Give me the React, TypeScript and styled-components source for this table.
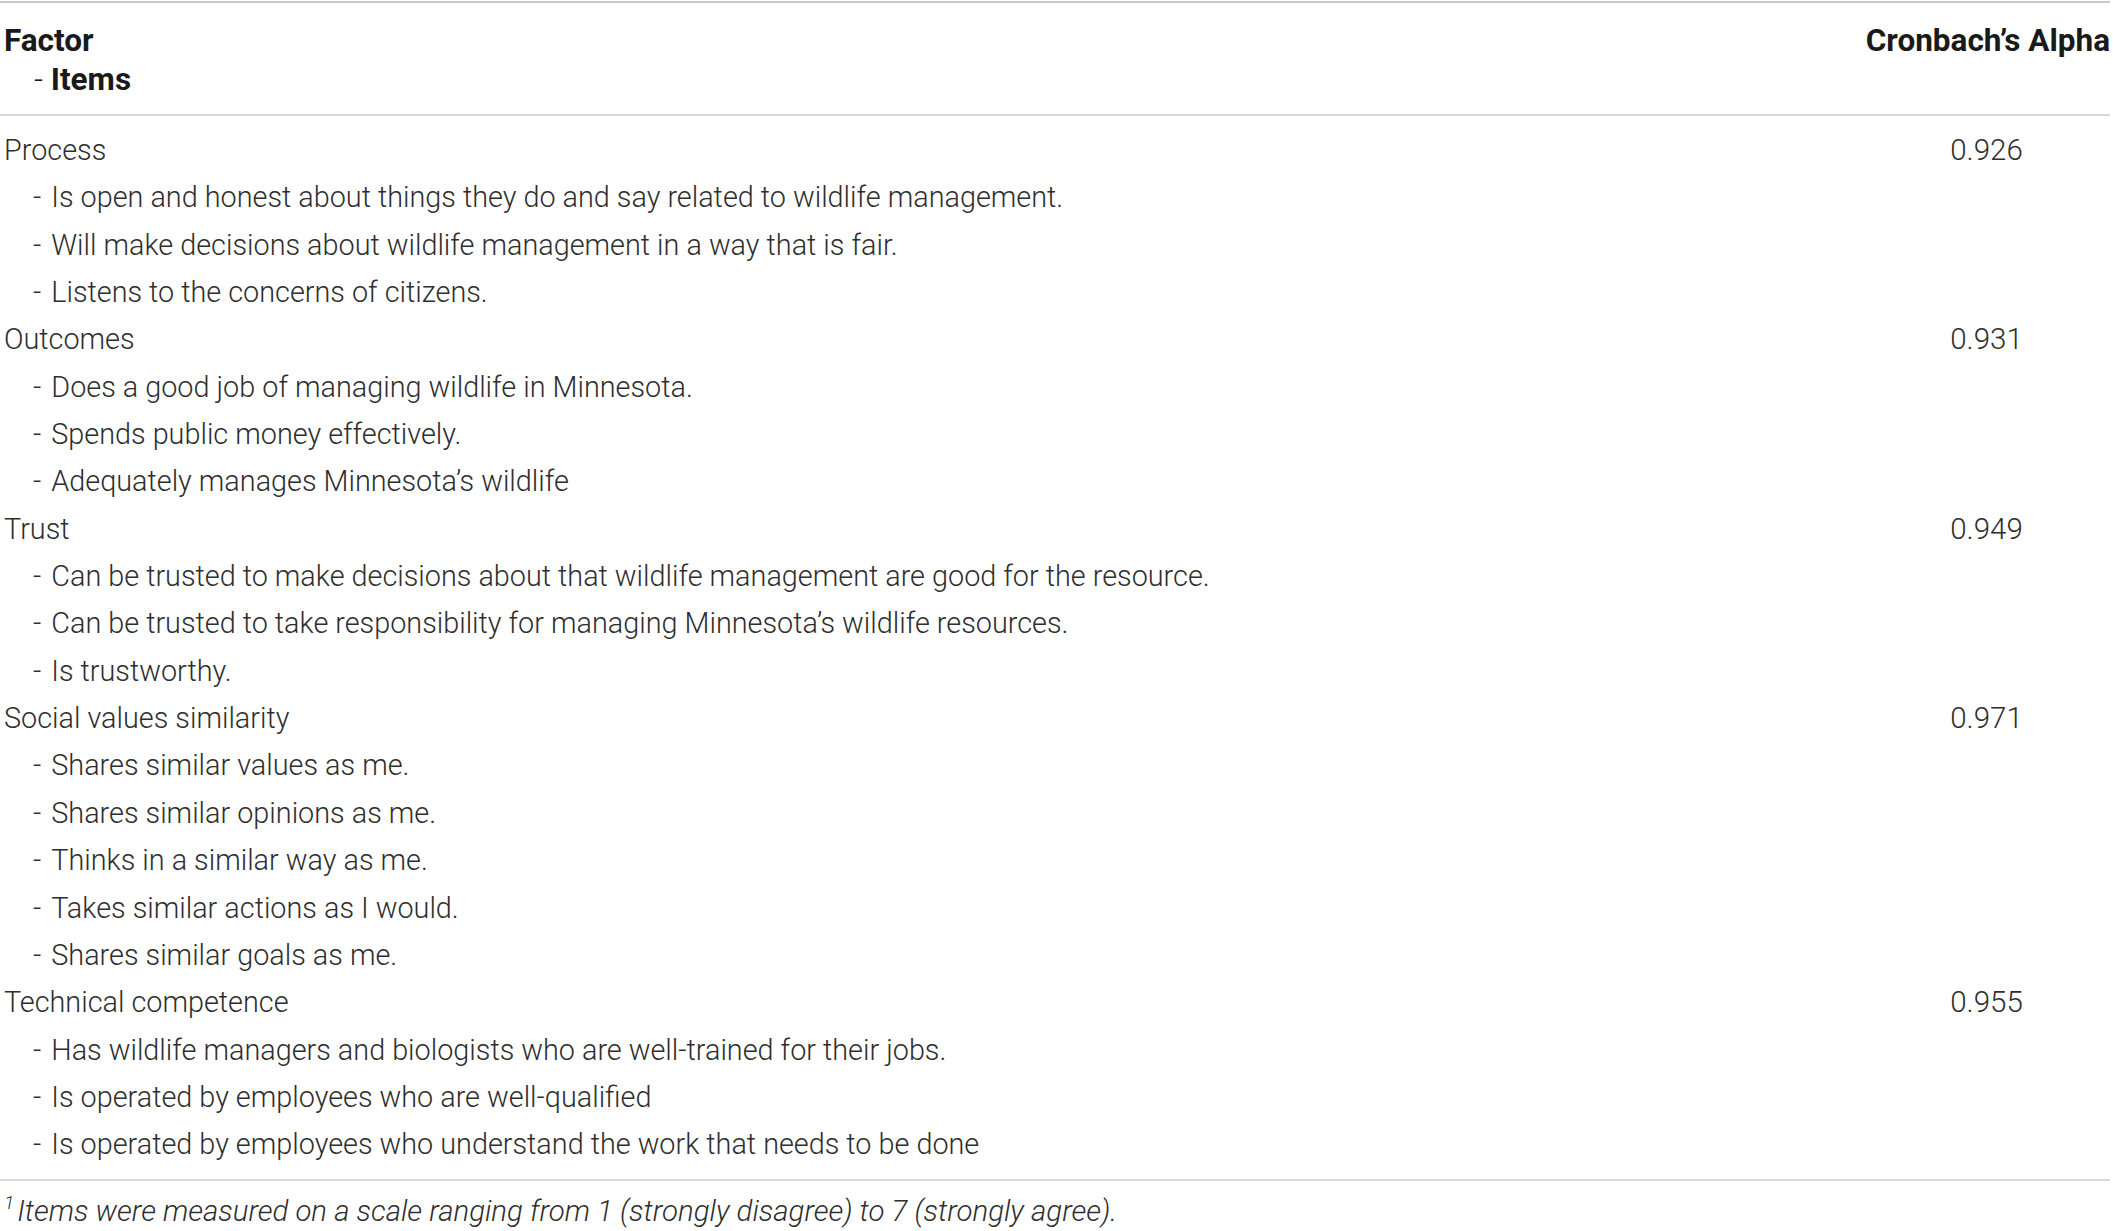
import React from "react";
import styled, { createGlobalStyle } from "styled-components";

const Global = createGlobalStyle`
  html, body { margin: 0; padding: 0; background: #fff; }
  body { font-family: Roboto, "Liberation Sans", Arial, sans-serif; color: #2e2e2e; }
`;

const Wrap = styled.div`
  width: 2110px;
  padding-top: 1px;
`;

const Table = styled.table`
  width: 100%;
  border-collapse: collapse;
  border-top: 2px solid #c8c8c8;
  border-bottom: 2px solid #d8d8d8;
  font-size: 28.8px;
  font-weight: 300;
`;

const HeadCell = styled.th<{ $right?: boolean }>`
  font-weight: 700;
  font-size: 31.5px;
  color: #1a1a1a;
  text-align: ${(p) => (p.$right ? "right" : "left")};
  vertical-align: top;
  line-height: 39px;
  padding: 18px 0 15px ${(p) => (p.$right ? "0" : "4px")};
  border-bottom: 2px solid #d8d8d8;
  width: ${(p) => (p.$right ? "247px" : "auto")};
`;

const SubHead = styled.span`
  display: block;
  padding-left: 30px;
  &::before { content: "- "; font-weight: 300; }
`;

const Row = styled.tr<{ $first?: boolean; $last?: boolean }>`
  td {
    padding-top: ${(p) => (p.$first ? "11px" : "0")};
    padding-bottom: ${(p) => (p.$last ? "10px" : "0")};
  }
`;

const Cell = styled.td<{ $indent?: boolean }>`
  line-height: 47.35px;
  padding-left: ${(p) => (p.$indent ? "33px" : "4px")};
  white-space: nowrap;
`;

const Dash = styled.span`
  margin-right: 10px;
`;

const Value = styled.td`
  line-height: 47.35px;
  font-size: 29.5px;
  text-align: center;
`;

const Foot = styled.p`
  margin: 0;
  padding: 13px 4px 0;
  font-style: italic;
  font-weight: 300;
  font-size: 29.4px;
  color: #2e2e2e;
  sup { font-size: 19px; vertical-align: 12px; line-height: 0; margin-right: 3px; }
`;

const data: { factor: string; alpha: string; items: string[] }[] = [
  {
    factor: "Process",
    alpha: "0.926",
    items: [
      "Is open and honest about things they do and say related to wildlife management.",
      "Will make decisions about wildlife management in a way that is fair.",
      "Listens to the concerns of citizens.",
    ],
  },
  {
    factor: "Outcomes",
    alpha: "0.931",
    items: [
      "Does a good job of managing wildlife in Minnesota.",
      "Spends public money effectively.",
      "Adequately manages Minnesota\u2019s wildlife",
    ],
  },
  {
    factor: "Trust",
    alpha: "0.949",
    items: [
      "Can be trusted to make decisions about that wildlife management are good for the resource.",
      "Can be trusted to take responsibility for managing Minnesota\u2019s wildlife resources.",
      "Is trustworthy.",
    ],
  },
  {
    factor: "Social values similarity",
    alpha: "0.971",
    items: [
      "Shares similar values as me.",
      "Shares similar opinions as me.",
      "Thinks in a similar way as me.",
      "Takes similar actions as I would.",
      "Shares similar goals as me.",
    ],
  },
  {
    factor: "Technical competence",
    alpha: "0.955",
    items: [
      "Has wildlife managers and biologists who are well-trained for their jobs.",
      "Is operated by employees who are well-qualified",
      "Is operated by employees who understand the work that needs to be done",
    ],
  },
];

export default function App() {
  const rows: { text: string; alpha?: string; indent: boolean }[] = [];
  data.forEach((g) => {
    rows.push({ text: g.factor, alpha: g.alpha, indent: false });
    g.items.forEach((it) => rows.push({ text: it, indent: true }));
  });
  return (
    <Wrap>
      <Global />
      <Table>
        <thead>
          <tr>
            <HeadCell>
              Factor
              <SubHead>Items</SubHead>
            </HeadCell>
            <HeadCell $right>Cronbach’s Alpha</HeadCell>
          </tr>
        </thead>
        <tbody>
          {rows.map((r, i) => (
            <Row key={i} $first={i === 0} $last={i === rows.length - 1}>
              <Cell $indent={r.indent}>
                {r.indent && <Dash>-</Dash>}
                {r.text}
              </Cell>
              <Value>{r.alpha ?? ""}</Value>
            </Row>
          ))}
        </tbody>
      </Table>
      <Foot>
        <sup>1</sup>Items were measured on a scale ranging from 1 (strongly disagree) to 7 (strongly agree).
      </Foot>
    </Wrap>
  );
}
